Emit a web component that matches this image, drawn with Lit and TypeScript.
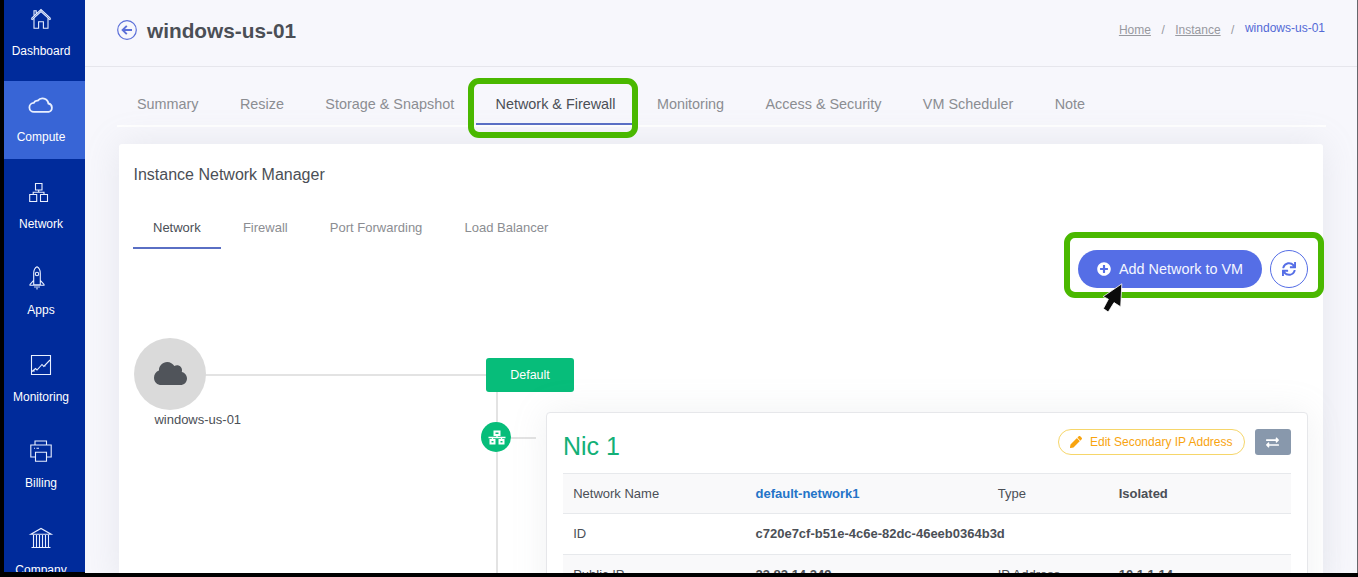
import { LitElement, html, svg, css } from "lit";
import { customElement, property } from "lit/decorators.js";

const SIDE_ICONS: Record<string, unknown> = {
  Dashboard: svg`<path d="M2.2 11.6 12 2.6l9.8 9M2.2 11.6l1 1L12 4.6l8.8 8 1-1M5 11v10.2h4.6v-6.4h4.8v6.400H19V11M5 8.600V3.800h2.200v2.600"/>`,
  Compute: svg`<path stroke-width="1.800" d="M5 18.900a4.500 4.500 0 0 1-.2-9 3.800 3.800 0 0 1 4-2.300 6 6 0 0 1 10.600 2.900 4.300 4.300 0 0 1 .2 8.400z"/>`,
  Network: svg`<path d="M6.500 3.500h6.500v6.500h-6.500zM.700 14.500h7v7h-7zM11.500 14.500h7v7h-7zM9.700 10v2.200M4.200 14.500v-2.200h10.800v2.200"/>`,
  Apps: svg`<path d="M4.700 18.800V7.500C4.700 3.800 6.300 1.600 8 .8c1.700.8 3.300 3 3.300 6.700v11.300zM4.700 14.300l-3.700 4.200v.8h14v-.8l-3.700-4.200M6 20.200v1.600M8 20.200v3.300M10 20.200v1.600"/><circle cx="8" cy="8" r="1.700"/>`,
  Monitoring: svg`<path d="M2.500 2.500h19v19h-19zM3 18.500l3.500-3 1.500 1.500 5-5.500 1.800 2 6.200-6.500M5 16.800v2M16 12v1.600"/>`,
  Billing: svg`<path d="M6 6V2h11.500v4M6.500 18h-4.700V6h20.400v12h-4.700M6.500 13.300h11v9h-11zM5 9.300h1M7.500 9.300H10"/>`,
  Company: svg`<path d="M1.800 8.200 12 2.500l10.200 5.700zM2.500 21.500h19M4.500 9v12M7.500 9v12M10.500 9v12M13.500 9v12M16.500 9v12M19.500 9v12"/>`,
};

@customElement("side-nav")
class SideNav extends LitElement {
  @property() active = "Compute";
  static styles = css`
    :host { display: block; background: #002b9b; overflow: hidden; }
    .list { display: flex; flex-direction: column; gap: 8.500px; margin-top: -5.400px; }
    .item {
      flex: none; box-sizing: border-box; height: 78px; padding: 12px 7px 0 0;
      display: flex; flex-direction: column; align-items: center; gap: 12px;
      color: #fff; font-size: 12px; line-height: 16px;
    }
    .on { background: #3865d6; }
    .pic { width: 24px; height: 24px; fill: none; stroke: #e9f0ff; stroke-width: 1.100; overflow: visible; }
  `;
  render() {
    return html`<nav class="list">
      ${Object.keys(SIDE_ICONS).map(
        (n) => html`<div class="item ${n === this.active ? "on" : ""}">
          <svg class="pic" viewBox="0 0 24 24">${SIDE_ICONS[n]}</svg><span>${n}</span>
        </div>`
      )}
    </nav>`;
  }
}

@customElement("tab-strip")
class TabStrip extends LitElement {
  @property({ attribute: false }) items: string[] = [];
  @property() active = "";
  static styles = css`
    :host { display: flex; }
    .tab { padding: 0 20px; color: #8b8d92; white-space: nowrap; border-bottom: 2px solid transparent; }
    .on { color: #4b4f56; border-color: #5a6fc4; }
  `;
  render() {
    return this.items.map((t) => html`<div class="tab ${t === this.active ? "on" : ""}">${t}</div>`);
  }
}

@customElement("nic-card")
class NicCard extends LitElement {
  static styles = css`
    :host {
      display: block; box-sizing: border-box; padding: 16px 16px 0; color: #4b4f56;
      background: #fff; border: 1px solid #e6e7ea; border-radius: 4px;
      box-shadow: 0 0 35px rgba(154, 161, 171, 0.15);
    }
    .head { display: flex; align-items: flex-start; height: 44px; }
    .name { flex: 1; margin: 0; font-size: 25px; line-height: 34px; font-weight: 400; color: #13b077; }
    .edit {
      box-sizing: border-box; width: 187px; height: 26px; border: 1px solid #f6d66a; border-radius: 13px;
      display: flex; align-items: center; gap: 7px; padding-left: 11px;
      color: #f8a40f; font-size: 12px; white-space: nowrap;
    }
    .edit svg { width: 12px; height: 12px; margin-right: 1px; fill: currentColor; }
    .swap {
      width: 36px; height: 26px; margin-left: 10px; border-radius: 3px; background: #8898ac;
      display: flex; align-items: center; justify-content: center;
    }
    .swap svg { width: 13px; height: 13px; margin-right: 1px; fill: #fff; }
    .row {
      display: grid; grid-template-columns: 182.300px 242.200px 121px 1fr; padding-left: 10.200px;
      border-top: 1px solid #e7e9ec; font-size: 13px; line-height: 39.400px; white-space: nowrap;
    }
    .row:nth-child(even) { background: #f9f9fa; }
    b { font-weight: 700; }
    .link { color: #2474c8; }
    .wide { grid-column: span 3; }
  `;
  render() {
    return html`
      <div class="head">
        <h2 class="name">Nic 1</h2>
        <div class="edit">
          <svg viewBox="0 0 512 512"><path d="M497.900 142.100l-46.100 46.100c-4.700 4.700-12.300 4.700-17 0l-111-111c-4.700-4.700-4.700-12.300 0-17l46.100-46.100c18.700-18.700 49.100-18.700 67.900 0l60.100 60.100c18.800 18.700 18.800 49.100 0 67.900zM284.200 99.800L21.600 362.400.4 483.900c-2.900 16.400 11.400 30.600 27.800 27.800l121.500-21.300 262.600-262.600c4.700-4.700 4.700-12.300 0-17l-111-111c-4.800-4.700-12.400-4.700-17.100 0z"/></svg>
          <span>Edit Secondary IP Address</span>
        </div>
        <div class="swap">
          <svg viewBox="0 0 512 512"><path d="M0 168v-16c0-13.255 10.745-24 24-24h360V80c0-21.367 25.899-32.042 40.971-16.971l80 80c9.372 9.373 9.372 24.569 0 33.941l-80 80C409.956 271.982 384 261.456 384 240v-48H24c-13.255 0-24-10.745-24-24zm488 152H128v-48c0-21.314-25.862-32.080-40.971-16.971l-80 80c-9.372 9.373-9.372 24.569 0 33.941l80 80C102.057 463.997 128 453.437 128 432v-48h360c13.255 0 24-10.745 24-24v-16c0-13.255-10.745-24-24-24z"/></svg>
        </div>
      </div>
      <div class="row"><span>Network Name</span><b class="link">default-network1</b><span>Type</span><b>Isolated</b></div>
      <div class="row"><span>ID</span><b class="wide">c720e7cf-b51e-4c6e-82dc-46eeb0364b3d</b></div>
      <div class="row"><span>Public IP</span><b>23.82.14.249</b><span>IP Address</span><b>10.1.1.14</b></div>
    `;
  }
}

@customElement("app-root")
class AppRoot extends LitElement {
  static styles = css`
    :host {
      box-sizing: border-box; display: grid; grid-template-columns: 81px 1fr; position: relative;
      width: 100%; height: 577px; overflow: hidden; background: #000; padding: 0 0 4px 4px;
      font-family: "Liberation Sans", Arial, sans-serif; color: #4b4f56;
    }
    side-nav { height: 572px; }
    .page { height: 573px; overflow: hidden; background: #f7f7fc; border-right: 1px solid #66676c; box-sizing: border-box; }
    .top {
      box-sizing: border-box; height: 67px; border-bottom: 1px solid #e6e6ec; padding: 0 32px;
      display: flex; align-items: flex-start; justify-content: space-between;
    }
    .title { display: flex; align-items: flex-start; gap: 10px; padding-top: 17px; }
    .title svg { width: 20px; height: 20px; margin-top: 3px; fill: none; stroke: #5b6fd9; }
    h1 { margin: 0; font-size: 20.800px; line-height: 28px; }
    .crumbs { display: flex; gap: 10.500px; padding-top: 22px; font-size: 12px; line-height: 16px; color: #98999f; }
    .crumbs a { text-decoration: underline; }
    .crumbs .here { color: #5369d6; margin-top: -2px; }
    .main-tabs { box-sizing: border-box; margin: 19px 31px 0 32px; height: 41px; font-size: 14.400px; line-height: 37px; gap: 1.400px; border-bottom: 2px solid #fff; }
    .panel { margin: 17px 34px 0; height: 440px; background: #fff; border-radius: 3px 3px 0 0; box-shadow: 0 0 35px rgba(154, 161, 171, 0.18); }
    .heading { margin: 0; padding: 21px 0 0 14.500px; font-size: 16px; line-height: 20px; font-weight: 400; }
    .sub-tabs { margin: 24px 0 0 14px; font-size: 13px; line-height: 38px; gap: 2.200px; height: 40px; }
    .actions { display: flex; justify-content: flex-end; gap: 8px; margin: 1px 15px 0 0; }
    .add {
      box-sizing: border-box; width: 184px; height: 38px; border-radius: 19px; background: #556ee6; color: #f4f6ff;
      display: flex; align-items: center; gap: 8px; padding-left: 19px; font-size: 14.400px; white-space: nowrap;
    }
    .add svg { width: 14px; height: 14px; fill: #fff; }
    .sync {
      box-sizing: border-box; width: 38px; height: 38px; border-radius: 50%; border: 1px solid #556ee6;
      display: flex; align-items: center; justify-content: center;
    }
    .sync svg { width: 14px; height: 14px; margin-right: 1px; fill: #556ee6; }
    .map { position: relative; height: 285px; }
    .wire { position: absolute; background: #e3e3e3; }
    .w1 { left: 86px; top: 86px; width: 282px; height: 2px; }
    .w2 { left: 377px; top: 100px; width: 2px; height: 190px; }
    .w3 { left: 390px; top: 149px; width: 27px; height: 2px; }
    .vm { position: absolute; left: 15px; top: 50px; width: 72px; height: 72px; border-radius: 50%; background: #dadada; display: grid; place-items: center; }
    .vm svg { width: 33px; height: 27px; fill: #50545a; margin: 0 0 1px 1px; }
    .vm-name { position: absolute; left: 35.400px; top: 123px; font-size: 13px; line-height: 18px; white-space: nowrap; }
    .zone { position: absolute; left: 367px; top: 70px; width: 88px; height: 34px; border-radius: 3px; background: #07bd7a; color: #fff; font-size: 12.500px; line-height: 34px; text-align: center; }
    .hub { position: absolute; left: 362px; top: 134px; width: 30px; height: 30px; border-radius: 50%; background: #07bd7a; display: grid; place-items: center; }
    .hub svg { width: 18px; height: 15px; fill: none; stroke: #fff; stroke-width: 2; margin-left: 1px; }
    nic-card { position: absolute; left: 427px; top: 124px; width: 762px; height: 200px; }
    .mark { position: absolute; box-sizing: border-box; border: 6px solid #4ab800; border-radius: 11px; }
    .m1 { left: 468px; top: 78px; width: 170px; height: 60px; }
    .m2 { left: 1064px; top: 232px; width: 260px; height: 66px; }
    .cursor { position: absolute; left: 1102px; top: 282px; width: 22px; height: 32px; fill: #0b0b0b; stroke: #fff; stroke-width: 0.800; }
  `;
  render() {
    return html`
      <side-nav active="Compute"></side-nav>
      <main class="page">
        <header class="top">
          <div class="title">
            <svg viewBox="0 0 20 20"><circle cx="10" cy="10" r="9.300" stroke-width="1.200"/><path stroke-width="1.900" d="M15 10H6M9.800 5.800 5.600 10l4.200 4.200"/></svg>
            <h1>windows-us-01</h1>
          </div>
          <div class="crumbs"><a>Home</a><span>/</span><a>Instance</a><span>/</span><span class="here">windows-us-01</span></div>
        </header>
        <tab-strip class="main-tabs" active="Network &amp; Firewall"
          .items=${["Summary", "Resize", "Storage & Snapshot", "Network & Firewall", "Monitoring", "Access & Security", "VM Scheduler", "Note"]}></tab-strip>
        <section class="panel">
          <h3 class="heading">Instance Network Manager</h3>
          <tab-strip class="sub-tabs" active="Network" .items=${["Network", "Firewall", "Port Forwarding", "Load Balancer"]}></tab-strip>
          <div class="actions">
            <div class="add">
              <svg viewBox="0 0 512 512"><path d="M256 8C119 8 8 119 8 256s111 248 248 248 248-111 248-248S393 8 256 8zm144 276c0 6.600-5.400 12-12 12h-92v92c0 6.600-5.400 12-12 12h-56c-6.600 0-12-5.400-12-12v-92h-92c-6.600 0-12-5.400-12-12v-56c0-6.600 5.400-12 12-12h92v-92c0-6.600 5.400-12 12-12h56c6.600 0 12 5.400 12 12v92h92c6.600 0 12 5.400 12 12v56z"/></svg>
              <span>Add Network to VM</span>
            </div>
            <div class="sync">
              <svg viewBox="0 0 512 512"><path d="M440.650 12.570l4 82.770A247.160 247.160 0 0 0 255.830 8C134.730 8 33.910 94.920 12.290 209.820A12 12 0 0 0 24.090 224h49.050a12 12 0 0 0 11.670-9.260 175.910 175.910 0 0 1 317-56.940l-101.460-4.860a12 12 0 0 0-12.570 12v47.410a12 12 0 0 0 12 12H500a12 12 0 0 0 12-12V12a12 12 0 0 0-12-12h-47.370a12 12 0 0 0-11.980 12.570zM255.830 432a175.610 175.610 0 0 1-146-77.800l101.800 4.870a12 12 0 0 0 12.570-12v-47.400a12 12 0 0 0-12-12H12a12 12 0 0 0-12 12V500a12 12 0 0 0 12 12h47.350a12 12 0 0 0 12-12.600l-4.150-82.570A247.170 247.170 0 0 0 255.830 504c121.110 0 221.930-86.920 243.550-201.820a12 12 0 0 0-11.800-14.180h-49.050a12 12 0 0 0-11.670 9.260A175.860 175.860 0 0 1 255.830 432z"/></svg>
            </div>
          </div>
          <div class="map">
            <i class="wire w1"></i><i class="wire w2"></i><i class="wire w3"></i>
            <div class="vm"><svg viewBox="0 0 640 512"><path d="M537.600 226.600c4.100-10.700 6.400-22.400 6.400-34.600 0-53-43-96-96-96-19.700 0-38.100 6-53.300 16.200C367 64.200 315.300 32 256 32c-88.400 0-160 71.600-160 160 0 2.700.1 5.400.2 8.100C40.200 219.800 0 273.200 0 336c0 79.500 64.500 144 144 144h368c70.700 0 128-57.300 128-128 0-61.900-44-113.600-102.400-125.400z"/></svg></div>
            <div class="vm-name">windows-us-01</div>
            <div class="zone">Default</div>
            <div class="hub"><svg viewBox="0 0 18 15"><path d="M6.500 1.500h5v3.500h-5zM2.500 10h4v3.500h-4zM11.500 10h4v3.500h-4z"/><path stroke-width="1.300" d="M.5 7.500h17M9 5.500v2M4.500 7.500v2M13.500 7.500v2"/></svg></div>
            <nic-card></nic-card>
          </div>
        </section>
      </main>
      <i class="mark m1"></i><i class="mark m2"></i>
      <svg class="cursor" viewBox="0 0 22 32"><path d="M19.800 1.800 1.200 14.600 6.400 17.200 1.400 26.600 6.200 30l5.800-9.400 6.700 4.200z"/></svg>
    `;
  }
}
